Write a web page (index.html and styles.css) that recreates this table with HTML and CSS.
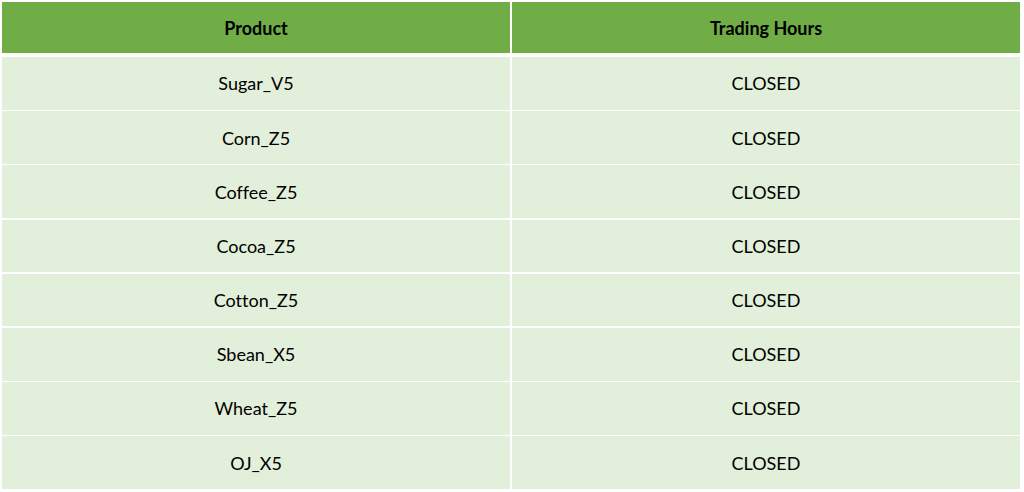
FILE: index.html
```html
<!DOCTYPE html>
<html>
<head>
<meta charset="utf-8">
<link rel="stylesheet" href="styles.css">
</head>
<body>
<div class="table">
  <div class="row head"><div class="cell">Product</div><div class="cell">Trading Hours</div></div>
  <div class="body">
    <div class="row"><div class="cell">Sugar_V5</div><div class="cell">CLOSED</div></div>
    <div class="row"><div class="cell">Corn_Z5</div><div class="cell">CLOSED</div></div>
    <div class="row"><div class="cell">Coffee_Z5</div><div class="cell">CLOSED</div></div>
    <div class="row"><div class="cell">Cocoa_Z5</div><div class="cell">CLOSED</div></div>
    <div class="row"><div class="cell">Cotton_Z5</div><div class="cell">CLOSED</div></div>
    <div class="row"><div class="cell">Sbean_X5</div><div class="cell">CLOSED</div></div>
    <div class="row"><div class="cell">Wheat_Z5</div><div class="cell">CLOSED</div></div>
    <div class="row"><div class="cell">OJ_X5</div><div class="cell">CLOSED</div></div>
  </div>
</div>
</body>
</html>
```
FILE: styles.css
```css
html, body { margin: 0; padding: 0; background: #ffffff; }
body { padding: 2px 0 0 2px; }
.table {
  width: 1018px;
  display: flex;
  flex-direction: column;
  gap: 4px;
  font-family: Lato, "Liberation Sans", sans-serif;
  font-size: 18px;
  font-variant-ligatures: none;
  color: #000;
}
.body { display: flex; flex-direction: column; gap: 1.5px; }
.row {
  display: grid;
  grid-template-columns: 1fr 1fr;
  column-gap: 2px;
  height: 52.7px;
}
.row.head { height: 51px; }
.cell {
  display: flex;
  align-items: center;
  justify-content: center;
  background: #e2efda;
}
.head .cell { background: #70ad47; font-weight: bold; }
```
